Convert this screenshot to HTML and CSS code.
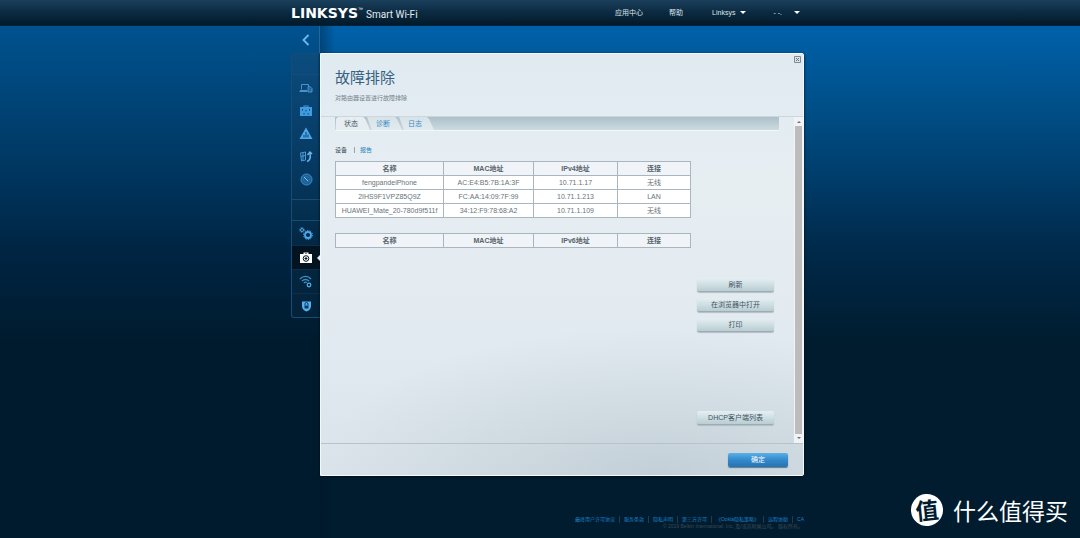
FILE: index.html
```html
<!DOCTYPE html>
<html lang="zh-CN">
<head>
<meta charset="utf-8">
<title>Linksys Smart Wi-Fi - 故障排除</title>
<link rel="stylesheet" href="styles.css">
</head>
<body>
<header class="topbar">
  <div class="wrap topbar-inner">
    <div class="brand"><span class="brand-name">LINKSYS</span><span class="brand-tm">™</span><span class="brand-sub">Smart Wi-Fi</span></div>
    <nav class="topnav">
      <a href="#">应用中心</a>
      <a href="#">帮助</a>
      <button type="button">Linksys <span class="caret"></span></button>
      <button type="button" class="account">- -. <span class="caret"></span></button>
    </nav>
  </div>
</header>

<main class="wrap main">
  <aside class="side">
    <button type="button" class="collapse" aria-label="收起">
      <svg width="8" height="12" viewBox="0 0 8 12"><path d="M6.500 1L1.500 6L6.500 11" fill="none" stroke="#6db9f0" stroke-width="1.800"/></svg>
    </button>
    <nav class="rail">
      <div class="rail-blank"></div>
      <div class="rail-group apps">
        <a href="#" aria-label="设备列表"><svg width="14" height="12" viewBox="0 0 14 12" fill="none" stroke="#4a92c9"><path d="M2.500 7.500v-5h7v2M0.500 9.500h8M1 8.500h7"/><path d="M9 4.500h2l2 2v3.500h-4z" fill="#26669a"/></svg></a>
        <a href="#" aria-label="访客访问"><svg width="14" height="12" viewBox="0 0 14 12"><path d="M1 2h3.500V0.500h5V2H13v9H1z" fill="#3f9be0"/><path d="M5.500 1.500h3V2h-3z" fill="#0a3a60"/><path d="M3.500 4v1.500M7 5v1.500M10.500 4v1.500M5 8v1.500M9 8v1.500" stroke="#0c4675"/></svg></a>
        <a href="#" aria-label="家长控制"><svg width="14" height="13" viewBox="0 0 14 13"><path d="M7 0.500L13.500 12H0.500z" fill="#4ba6ea"/><path d="M5 10.500V8M7 10.500V5M9 10.500V7.500" stroke="#0c3e68"/></svg></a>
        <a href="#" aria-label="介质优先级"><svg width="14" height="13" viewBox="0 0 14 13" fill="none" stroke="#4a9bd8"><path d="M1.500 3l5-1v8l-4 1zM2 6.500l4-1M4 2.500v8"/><path d="M8 11.500c3-1 4-3 3-8M8.500 5l2.500-3 2 2" stroke="#6ab6ee" stroke-width="1.500"/></svg></a>
        <a href="#" aria-label="速度测试"><svg width="13" height="13" viewBox="0 0 13 13"><circle cx="6.500" cy="6.500" r="5.500" fill="#1c6098" stroke="#3d8dc8"/><circle cx="6.500" cy="6.500" r="3" fill="none" stroke="#3986bf" stroke-dasharray="1 1"/><path d="M4 4l4 4" stroke="#86c8f7"/></svg></a>
      </div>
      <div class="rail-blank"></div>
      <div class="rail-group settings">
        <a href="#" aria-label="连接"><svg width="14" height="13" viewBox="0 0 14 13" fill="none"><circle cx="9" cy="8" r="3" stroke="#4ba8ef" stroke-width="1.800"/><circle cx="9" cy="8" r="4.500" stroke="#4ba8ef" stroke-dasharray="1.400 1.400"/><circle cx="3" cy="3" r="1.500" stroke="#5aaee9"/><circle cx="3" cy="3" r="2.500" stroke="#3986bf" stroke-dasharray="1 1"/></svg></a>
        <a href="#" class="active" aria-label="故障排除"><svg width="12" height="11" viewBox="0 0 12 11"><path d="M0 2h3.500V0.500h5V2H12v9H0z" fill="#fff"/><path d="M5 1.500h2V2H5z" fill="#03131f"/><circle cx="6" cy="6.500" r="2.800" fill="#fff" stroke="#03131f"/><path d="M6 5v3M4.500 6.500h3" stroke="#03131f"/></svg></a>
        <a href="#" aria-label="无线"><svg width="14" height="13" viewBox="0 0 14 13" fill="none" stroke="#3f8fca" stroke-width="1.300"><path d="M1 4C4 0.500 9 0.500 12 4M3 6C5 4 8 4 10 6M4.800 8C6 7 7 7 8 7.500"/><circle cx="10" cy="10" r="1.800" stroke="#55aaea"/></svg></a>
        <a href="#" aria-label="安全"><svg width="11" height="12" viewBox="0 0 11 12"><path d="M1 1.500h9V6c0 3-2 4.500-4.500 5.500C3 10.500 1 9 1 6z" fill="#57b0f2"/><path d="M4 5.500V4a1.500 1.500 0 0 1 3 0v1.500" fill="none" stroke="#0a3a60"/><path d="M3.500 5.500h4v3h-4z" fill="#0a3a60"/></svg></a>
      </div>
    </nav>
  </aside>

  <section class="panel">
    <header class="panel-head">
      <div>
        <h1>故障排除</h1>
        <p>对路由器设置进行故障排除</p>
      </div>
      <button type="button" class="close" aria-label="关闭"><svg width="7" height="7" viewBox="0 0 7 7"><path d="M0.500 0.500h6v6h-6z" fill="#dce5ea" stroke="#7d8b93"/><path d="M2 2l3 3M5 2l-3 3" stroke="#65757f"/></svg></button>
    </header>

    <div class="panel-body">
      <div class="content">
        <nav class="tabs">
          <a href="#" class="tab current">状态</a>
          <a href="#" class="tab">诊断</a>
          <a href="#" class="tab">日志</a>
        </nav>
        <div class="views"><span>设备</span><i></i><a href="#">报告</a></div>
        <div class="columns">
          <div class="tables">
            <table>
              <thead><tr><th class="c-name">名称</th><th class="c-mac">MAC地址</th><th class="c-ip">IPv4地址</th><th>连接</th></tr></thead>
              <tbody>
                <tr><td>fengpandeiPhone</td><td>AC:E4:B5:7B:1A:3F</td><td>10.71.1.17</td><td>无线</td></tr>
                <tr><td>2IHS9F1VPZ85Q9Z</td><td>FC:AA:14:09:7F:99</td><td>10.71.1.213</td><td>LAN</td></tr>
                <tr><td>HUAWEI_Mate_20-780d9f511f</td><td>34:12:F9:78:68:A2</td><td>10.71.1.109</td><td>无线</td></tr>
              </tbody>
            </table>
            <table>
              <thead><tr><th class="c-name">名称</th><th class="c-mac">MAC地址</th><th class="c-ip">IPv6地址</th><th>连接</th></tr></thead>
            </table>
          </div>
          <div class="actions">
            <button type="button" class="btn">刷新</button>
            <button type="button" class="btn">在浏览器中打开</button>
            <button type="button" class="btn">打印</button>
            <button type="button" class="btn dhcp">DHCP客户端列表</button>
          </div>
        </div>
      </div>
      <div class="scrollbar">
        <button type="button" class="arrow up" aria-label="向上滚动"></button>
        <div class="thumb"></div>
        <button type="button" class="arrow down" aria-label="向下滚动"></button>
      </div>
    </div>

    <footer class="panel-foot">
      <button type="button" class="btn-ok">确定</button>
    </footer>
  </section>
</main>

<footer class="wrap legal">
  <nav class="legal-links">
    <a href="#">最终用户许可协议</a>
    <a href="#">服务条款</a>
    <a href="#">隐私声明</a>
    <a href="#">第三方许可</a>
    <a href="#">《Ookla隐私策略》</a>
    <a href="#">远程协助</a>
    <a href="#">CA</a>
  </nav>
  <p>© 2019 Belkin International, Inc. 及/或其附属公司。 版权所有。</p>
</footer>

<div class="watermark"><span class="mark">值</span><span>什么值得买</span></div>
</body>
</html>
```
FILE: styles.css
```css
* { box-sizing: border-box; }

body {
  margin: 0;
  min-height: 100vh;
  background:
    linear-gradient(90deg, rgba(0, 20, 40, .2) calc(50% - 220px), rgba(0, 20, 40, .35) calc(50% - 220px), transparent calc(50% - 205px)),
    #001c2e linear-gradient(#0061aa 26px, #00538f 90px, #003f6e 170px, #00294a 250px, #001c2e 345px) no-repeat;
  color: #5b6a72;
  font: 7px/10px "Liberation Sans", "Noto Sans CJK SC", sans-serif;
}

a { color: inherit; text-decoration: none; }
button { margin: 0; padding: 0; border: 0; background: none; color: inherit; font: inherit; }
h1, p { margin: 0; font-weight: normal; }
svg { display: block; }

.wrap { width: 100%; max-width: 528px; margin: 0 auto; padding-left: 15px; }

/* Top bar */
.topbar { background: linear-gradient(#1b405c, #0b2a41 50%, #021a2a); border-bottom: 1px solid #04233b; }
.topbar-inner { display: flex; justify-content: space-between; align-items: center; height: 25px; }
.brand { display: flex; align-items: baseline; color: #fff; line-height: 16px; padding-top: 3px; }
.brand-name { font: bold 14px/16px "DejaVu Sans", sans-serif; }
.brand-tm { align-self: flex-start; font-size: 5px; line-height: 8px; }
.brand-sub { margin-left: 3px; font: 10px/16px Roboto, sans-serif; color: #e3ebf0; }
.topnav { display: flex; color: #dce5ea; padding-right: 4px; }
.topnav a { margin-right: 26px; }
.topnav button { display: flex; align-items: center; gap: 5px; margin-left: 3px; }
.topnav .account { gap: 12px; margin-left: 27px; }
.caret { border: 3px solid transparent; border-top-color: #fff; border-bottom: 0; }

/* Navigation rail */
.main { display: flex; }
.side { width: 29px; flex: none; }
.collapse { display: grid; place-items: center; width: 100%; height: 27px; padding-left: 1px; border-right: 1px solid #246797; }
.rail { border: 1px solid #174c74; border-right: 0; border-radius: 3px 0 0 3px; background: linear-gradient(#0b4c7e, #06385f 45%, #032640 75%, #03233a); }
.rail-blank { height: 21px; border-bottom: 1px solid #174c74; }
.rail-group a { display: grid; place-items: center; height: 24px; }
.apps { padding: 1px 0 8px; border-bottom: 1px solid #174c74; }
.rail-group.apps a { height: 23px; }
.settings a + a { border-top: 1px solid #0b2f4b; }
.settings .active { position: relative; background: #03131f; }
.active::after { content: ""; position: absolute; right: 0; border: 3px solid transparent; border-right-color: #e6edf1; border-left: 0; }

/* Panel */
.panel {
  flex: 1;
  margin: 27px 0 0;
  border: 1px solid #f5f8fa;
  border-radius: 0 2px 2px 0;
  background:
    radial-gradient(ellipse 340px 150px at 70% 100%, rgba(160, 178, 187, .4), transparent),
    linear-gradient(#e0eaf1, #e6eef2 30%, #e2eaf1 70%, #dae3e9);
  box-shadow: 0 1px 3px #00101c;
}
.panel-head { display: flex; justify-content: space-between; align-items: flex-start; height: 63px; padding: 2px 2px 0 14px; border-bottom: 1px solid #cbd7dd; }
h1 { margin-top: 11px; color: #37627f; font-size: 15px; line-height: 22px; }
.panel-head p { margin-top: 4px; color: #74828a; font-size: 6px; line-height: 10px; }
.panel-body { display: flex; min-height: 326px; }
.content { flex: 1; padding: 0 15px 18px 14px; display: flex; flex-direction: column; }
.tabs { display: flex; height: 14px; padding-left: 1px; border-bottom: 1px solid #f1f6f8; background: linear-gradient(#adbfc8, #ccdbe1); }
.tab { padding: 2px 12px 0 9px; margin-right: -3px; color: #3288c4; font-size: 7px; background: linear-gradient(#d7e3e8, #e2ebef); clip-path: polygon(0 0, 80% 0, 86% 15%, 100% 100%, 5px 100%); }
.tab.current { padding-left: 8px; color: #455863; background: #e7eef1; clip-path: polygon(0 15%, 2px 0, 80% 0, 86% 15%, 100% 100%, 0 100%); }
.views { display: flex; align-items: center; margin: 14px 0 6px; font-size: 6px; color: #33444e; }
.views i { width: 1px; height: 6px; margin: 0 5px 0 7px; background: #97a5ac; }
.views a { color: #2a82c0; }
.columns { display: flex; flex: 1; gap: 6px; }
.tables { flex: 1; }
table { width: 100%; table-layout: fixed; border-collapse: collapse; margin-bottom: 15px; color: #68737a; text-align: center; }
th, td { height: 14px; padding: 0; line-height: 10px; border: 1px solid #a9b6bf; background: #fff; }
th { background: #f0f4f8; color: #56636b; }
.c-name { width: 108px; }
.c-mac { width: 90px; }
.c-ip { width: 84px; }
.actions { display: flex; flex-direction: column; gap: 6px; width: 77px; margin-right: 5px; padding-top: 117px; }
.btn { height: 14px; border-radius: 2px; border-bottom: 1px solid #9eabb1; background: linear-gradient(#e5eff2, #cfdfe3 50%, #b9cdd2); box-shadow: 0 1px 1px #b1bec5; color: #3f535e; }
.dhcp { margin-top: auto; }

/* Scrollbar */
.scrollbar { display: flex; flex-direction: column; width: 9px; padding: 1px; background: #f2f3f4; }
.thumb { flex: 1; background: #bcbcbc; }
.arrow { display: grid; place-items: center; height: 8px; }
.arrow::before { content: ""; border: 2px solid transparent; }
.up::before { border-bottom-color: #6c7376; border-top: 0; }
.down::before { border-top-color: #6c7376; border-bottom: 0; }

.panel-foot { display: flex; justify-content: flex-end; align-items: center; height: 32px; padding-right: 15px; border-top: 1px solid #b7c3ca; }
.btn-ok { width: 60px; height: 14px; border-radius: 2px; background: linear-gradient(#5ab0e6, #3389cb 50%, #2673b2); box-shadow: 0 1px 1px #61798b; color: #fff; }

/* Footer */
.legal { margin-top: 40px; font-size: 5px; line-height: 7px; text-align: right; color: #3b4a56; }
.legal-links { display: flex; justify-content: flex-end; color: #1f80cb; }
.legal-links a + a { margin-left: 4px; padding-left: 4px; border-left: 1px solid #1d3c53; }
.legal p { padding-right: 1px; }

/* Site mark */
.watermark { position: absolute; right: 12px; bottom: 11px; display: flex; align-items: center; gap: 10px; color: #fff; font: 23px/34px "Noto Sans CJK SC", sans-serif; }
.mark { width: 32px; height: 32px; border-radius: 50%; background: #fff; color: #001c2e; font-size: 23px; line-height: 31px; font-weight: bold; text-align: center; transform: rotate(-6deg); }
```
